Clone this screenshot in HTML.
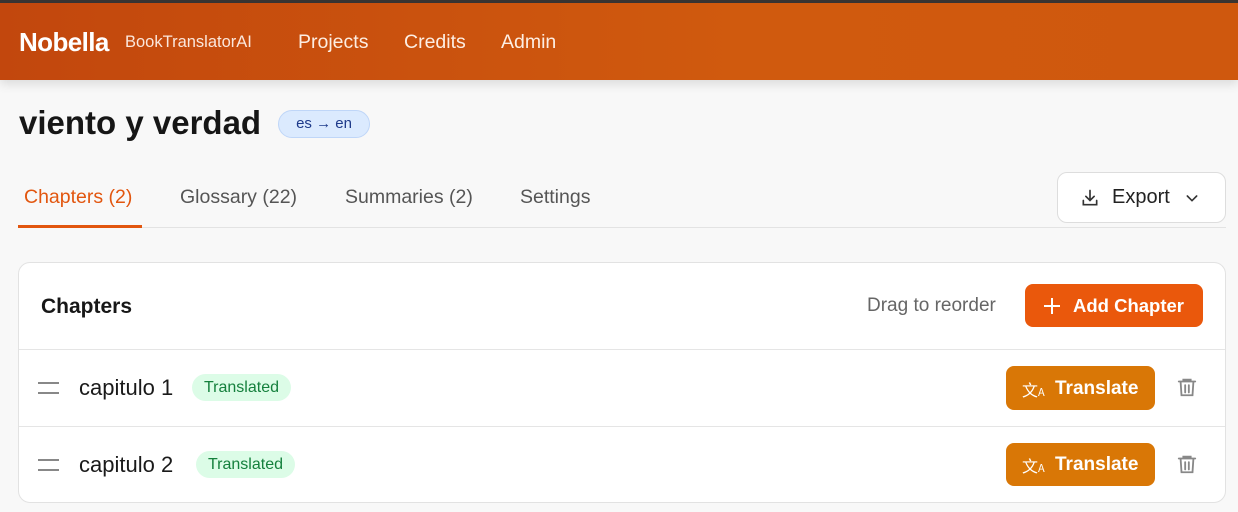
<!DOCTYPE html>
<html><head><style>
*{box-sizing:border-box;margin:0;padding:0}
body{width:1238px;height:512px;overflow:hidden;background:#f8f8f8;font-family:"Liberation Sans",sans-serif;position:relative}
.top{position:absolute;left:0;top:0;width:1238px;height:3px;background:#3a3533}
.hdr{position:absolute;left:0;top:3px;width:1238px;height:77px;background:linear-gradient(90deg,#c2470d,#d05a0e 60%,#cf580e);box-shadow:0 4px 10px rgba(0,0,0,.12)}
.abs{position:absolute;white-space:nowrap}
.logo{left:19px;top:27px;font-size:26px;font-weight:bold;color:#fff;letter-spacing:-0.6px}
.sub{left:125px;top:33px;font-size:16.5px;color:#fbe7dc}
.nav{top:31px;font-size:19.5px;color:#fdeee3}
h1{position:absolute;left:19px;top:104px;font-size:33px;font-weight:bold;color:#161616}
.pill{left:278px;top:110px;width:92px;height:28px;border-radius:14px;background:#dbeafe;border:1px solid #bfd6f8;color:#1e3a8a;font-size:15px;text-align:center;line-height:26px}
.tab{top:186px;font-size:19.5px;color:#555}
.exp{left:1057px;top:172px;width:169px;height:51px;border:1px solid #ddd;border-radius:10px;background:#fff}
.card{left:18px;top:262px;width:1208px;height:241px;border:1px solid #e2e2e2;border-radius:12px;background:#fff}
.btn{border-radius:8px;color:#fff;font-size:18px;font-weight:bold}
.badge{height:27px;border-radius:14px;background:#dcfce7;color:#15803d;font-size:16px;line-height:27px;padding:0 12px}
</style></head><body>
<div class="top"></div>
<div class="hdr"></div>
<div class="abs logo">Nobella</div>
<div class="abs sub">BookTranslatorAI</div>
<div class="abs nav" style="left:298px">Projects</div>
<div class="abs nav" style="left:404px">Credits</div>
<div class="abs nav" style="left:501px">Admin</div>
<h1>viento y verdad</h1>
<div class="abs pill">es → en</div>
<div class="abs tab" style="left:24px;color:#e2560f">Chapters (2)</div>
<div class="abs tab" style="left:180px">Glossary (22)</div>
<div class="abs tab" style="left:345px">Summaries (2)</div>
<div class="abs tab" style="left:520px">Settings</div>
<div class="abs" style="left:18px;top:227px;width:1208px;height:1px;background:#e3e3e3"></div>
<div class="abs" style="left:18px;top:225px;width:124px;height:3px;background:#e2560f"></div>
<div class="abs exp"></div>
<svg class="abs" style="left:1080px;top:188px" width="20" height="20" viewBox="0 0 24 24" fill="none" stroke="#333" stroke-width="2" stroke-linecap="round"><path d="M12 3v12M7 10l5 5 5-5M4 15v5h16v-5"/></svg>
<div class="abs" style="left:1112px;top:186px;font-size:20px;color:#222">Export</div>
<svg class="abs" style="left:1184px;top:190px" width="16" height="16" viewBox="0 0 24 24" fill="none" stroke="#333" stroke-width="2.4" stroke-linecap="round"><path d="M5 9l7 7 7-7"/></svg>
<div class="abs card"></div>
<div class="abs" style="left:41px;top:295px;font-size:21px;font-weight:bold;color:#171717">Chapters</div>
<div class="abs" style="left:867px;top:295px;font-size:19px;color:#666">Drag to reorder</div>
<div class="abs btn" style="left:1025px;top:284px;width:178px;height:43px;background:#ea580c"></div>
<svg class="abs" style="left:1042px;top:296px" width="20" height="20" viewBox="0 0 20 20" stroke="#fff" stroke-width="2"><path d="M10 2v16M2 10h16"/></svg>
<div class="abs" style="left:1073px;top:295px;font-size:18.5px;font-weight:bold;color:#fff">Add Chapter</div>
<div class="abs" style="left:19px;top:349px;width:1206px;height:1px;background:#e5e5e5"></div>
<div class="abs" style="left:19px;top:426px;width:1206px;height:1px;background:#e5e5e5"></div>

<div class="abs" style="left:38px;top:382px;width:21px;height:2px;background:#888;box-shadow:0 10px 0 #888"></div>
<div class="abs" style="left:79px;top:375px;font-size:22px;color:#1a1a1a">capitulo 1</div>
<div class="abs badge" style="left:192px;top:374px">Translated</div>
<div class="abs btn" style="left:1006px;top:366px;width:149px;height:44px;background:#d97706"></div>
<div class="abs" style="left:1022px;top:377px;font-size:16px;color:#fff;font-family:'Noto Sans CJK SC',sans-serif">文<span style="font-size:11px">A</span></div>
<div class="abs" style="left:1055px;top:378px;font-size:19px;font-weight:bold;color:#fff">Translate</div>
<svg class="abs" style="left:1176px;top:376px" width="22" height="22" viewBox="0 0 24 24" fill="none" stroke="#888" stroke-width="2" stroke-linecap="round"><path d="M3 6h18M8 6V4h8v2M5 6l1 15h12l1-15M10 10v8M14 10v8"/></svg>

<div class="abs" style="left:38px;top:459px;width:21px;height:2px;background:#888;box-shadow:0 10px 0 #888"></div>
<div class="abs" style="left:79px;top:452px;font-size:22px;color:#1a1a1a">capitulo 2</div>
<div class="abs badge" style="left:196px;top:451px">Translated</div>
<div class="abs btn" style="left:1006px;top:443px;width:149px;height:43px;background:#d97706"></div>
<div class="abs" style="left:1022px;top:453px;font-size:16px;color:#fff;font-family:'Noto Sans CJK SC',sans-serif">文<span style="font-size:11px">A</span></div>
<div class="abs" style="left:1055px;top:454px;font-size:19px;font-weight:bold;color:#fff">Translate</div>
<svg class="abs" style="left:1176px;top:453px" width="22" height="22" viewBox="0 0 24 24" fill="none" stroke="#888" stroke-width="2" stroke-linecap="round"><path d="M3 6h18M8 6V4h8v2M5 6l1 15h12l1-15M10 10v8M14 10v8"/></svg>
</body></html>
